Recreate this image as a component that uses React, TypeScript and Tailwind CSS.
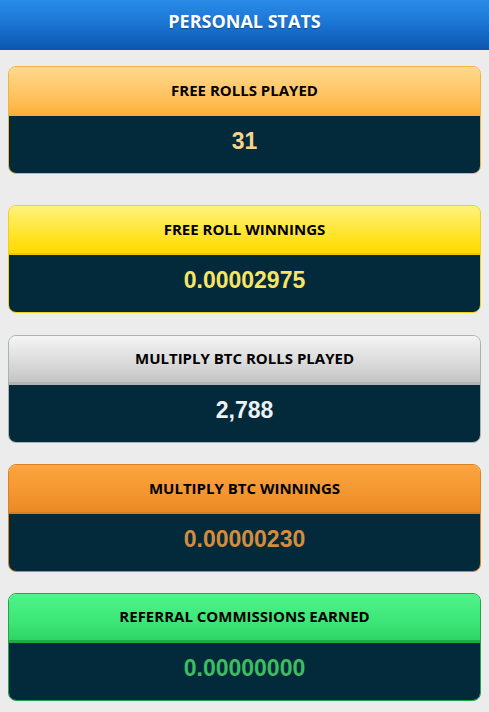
const stats = [
  {
    label: "FREE ROLLS PLAYED",
    value: "31",
    border: "border-[#f2b43c]",
    head: "bg-[linear-gradient(#ffd98f,#ffbf58_70%,#fbb13c)] border-b-[2px] border-[#f2ad3a]",
    text: "text-[#f7d38c]",
    mt: "mt-[16px]",
  },
  {
    label: "FREE ROLL WINNINGS",
    value: "0.00002975",
    border: "border-[#f2cf1c]",
    head: "bg-[linear-gradient(#fff27e,#ffe21e_70%,#ffd800)] border-b-[2px] border-[#efc500]",
    text: "text-[#f7e565]",
    mt: "mt-[31px]",
  },
  {
    label: "MULTIPLY BTC ROLLS PLAYED",
    value: "2,788",
    border: "border-[#a9b3b6]",
    head: "bg-[linear-gradient(#f4f4f4,#d9d9d9_60%,#c4c4c4)] border-b-[3px] border-[#b3b3b3]",
    text: "text-[#eef2f4]",
    mt: "mt-[22px]",
  },
  {
    label: "MULTIPLY BTC WINNINGS",
    value: "0.00000230",
    border: "border-[#d9841f]",
    head: "bg-[linear-gradient(#fca43f,#f3962f_60%,#e98a27)] border-b-[2px] border-[#d97f1e]",
    text: "text-[#d48d3e]",
    mt: "mt-[21px]",
  },
  {
    label: "REFERRAL COMMISSIONS EARNED",
    value: "0.00000000",
    border: "border-[#1fa54a]",
    head: "bg-[linear-gradient(#50f489,#3ce677_60%,#2ed466)] border-b-[3px] border-[#21a94c]",
    text: "text-[#3dbd62]",
    mt: "mt-[21px]",
  },
];

function StatCard(props: (typeof stats)[number]) {
  return (
    <div className={`${props.mt} overflow-hidden rounded-[8px] border ${props.border}`}>
      <div
        className={`flex h-[49px] items-center justify-center pb-[1px] font-['Open_Sans',sans-serif] text-[15px] font-bold text-black ${props.head}`}
      >
        {props.label}
      </div>
      <div
        className={`flex h-[57px] items-center justify-center bg-[#032a3a] pb-[6px] font-['Liberation_Sans',Arial,sans-serif] text-[23px] font-bold ${props.text}`}
      >
        {props.value}
      </div>
    </div>
  );
}

export default function App() {
  return (
    <div className="min-h-[712px] w-full bg-[#ececec] pb-[10px]">
      <div className="flex h-[50px] items-center justify-center bg-[linear-gradient(#2a8ce8,#1a73d2_50%,#0c56ad)] pb-[7px] font-['Open_Sans',sans-serif] text-[18px] font-bold text-white [text-shadow:0_1px_1px_rgba(0,0,0,0.35)]">
        PERSONAL STATS
      </div>
      <div className="px-[8px]">
        {stats.map((s) => (
          <StatCard key={s.label} {...s} />
        ))}
      </div>
    </div>
  );
}
